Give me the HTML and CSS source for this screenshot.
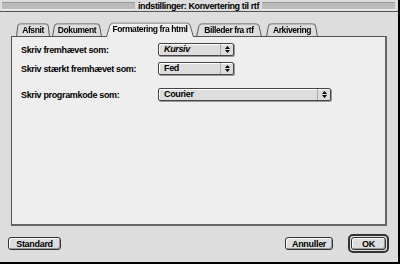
FILE: index.html
```html
<!DOCTYPE html>
<html lang="da">
<head>
  <meta charset="UTF-8">
  <title>indstillinger: Konvertering til rtf</title>
  <link rel="stylesheet" href="styles.css">
</head>
<body>
  <div class="window">
    <div class="titlebar">
      <div class="stripes"></div>
      <span class="title">indstillinger: Konvertering til rtf</span>
      <div class="stripes"></div>
    </div>

    <div class="tabs">
      <div class="tab t-afsnit">Afsnit</div>
      <div class="tab t-dok">Dokument</div>
      <div class="tab t-html active">Formatering fra html</div>
      <div class="tab t-bill">Billeder fra rtf</div>
      <div class="tab t-ark">Arkivering</div>
    </div>

    <div class="panel">
      <div class="row">
        <label>Skriv fremhævet som:</label>
        <div class="popup short"><span class="val italic">Kursiv</span><span class="arrows"><svg width="5" height="7" viewBox="0 0 5 7"><path d="M2.5 0L5 3H0z M0 4h5L2.5 7z" fill="#000"/></svg></span></div>
      </div>
      <div class="row">
        <label>Skriv stærkt fremhævet som:</label>
        <div class="popup short"><span class="val">Fed</span><span class="arrows"><svg width="5" height="7" viewBox="0 0 5 7"><path d="M2.5 0L5 3H0z M0 4h5L2.5 7z" fill="#000"/></svg></span></div>
      </div>
      <div class="row gap-top">
        <label>Skriv programkode som:</label>
        <div class="popup long"><span class="val">Courier</span><span class="arrows"><svg width="5" height="7" viewBox="0 0 5 7"><path d="M2.5 0L5 3H0z M0 4h5L2.5 7z" fill="#000"/></svg></span></div>
      </div>
    </div>

    <div class="footer">
      <button class="btn std">Standard</button>
      <div class="right">
        <button class="btn cancel">Annuller</button>
        <span class="ring"><button class="btn ok">OK</button></span>
      </div>
    </div>
  </div>
</body>
</html>
```

FILE: styles.css
```css
body {
  margin: 0;
  padding: 0;
  background-color: #000;
  font-family: "Liberation Sans", Arial, sans-serif;
  font-weight: bold;
  font-size: 9px;
  letter-spacing: -0.35px;
  color: #000;
}

.window {
  width: 398px;
  height: 262px;
  background-color: #dddddd;
  overflow: hidden;
}

.titlebar {
  height: 12px;
  display: flex;
  align-items: center;
  gap: 3px;
  padding: 0 3px 0 2px;
  border-bottom: 1px solid #555;
  box-sizing: border-box;
  background-color: #dddddd;
}

.stripes {
  flex: 1;
  height: 8px;
  background-color: #bbbbbb;
  border-top: 1px solid #999;
  border-bottom: 1px solid #eee;
  box-sizing: border-box;
}

.title {
  white-space: nowrap;
  letter-spacing: -0.4px;
}

.tabs {
  display: flex;
  align-items: flex-end;
  height: 16px;
  margin-top: 9px;
  padding-left: 16px;
}

.tab {
  position: relative;
  height: 15px;
  line-height: 16px;
  text-align: center;
  box-sizing: border-box;
  z-index: 1;
  font-size: 8.5px;
  letter-spacing: -0.4px;
  white-space: nowrap;
}

.tab::before {
  content: "";
  position: absolute;
  inset: 0;
  z-index: -1;
  background-color: #dddddd;
  border: 1px solid #555;
  border-bottom: none;
  border-radius: 4px 4px 0 0;
  transform: perspective(18px) rotateX(7deg);
  transform-origin: bottom;
}

.tab.active {
  height: 16px;
  z-index: 2;
}

.tab.active::before {
  background-color: #eeeeee;
  box-shadow: inset 1px 1px #fff;
}

.t-afsnit { width: 34px; }
.t-dok { width: 50px; margin-left: 2px; }
.t-html { width: 88px; margin-left: 4px; }
.t-bill { width: 66px; margin-left: 2px; }
.t-ark { width: 52px; margin-left: 4px; }

.panel {
  margin: -1px 11px 0 11px;
  height: 190px;
  background-color: #eeeeee;
  border: 1px solid #555;
  border-right: 2px solid #666;
  border-bottom: 2px solid #666;
  box-sizing: border-box;
  padding: 6px 0 0 9px;
  position: relative;
  z-index: 1;
}

.row {
  display: flex;
  align-items: center;
  height: 13px;
  margin-bottom: 6px;
}

.row.gap-top {
  margin-top: 13px;
}

.row label {
  width: 137px;
}

.popup {
  display: flex;
  align-items: stretch;
  height: 13px;
  background-color: #dddddd;
  border: 1px solid #444;
  border-radius: 2px;
  box-shadow: 1px 1px 0 #999, inset 1px 1px #fff;
  box-sizing: border-box;
}

.popup.short { width: 76px; }
.popup.long { width: 173px; }

.val {
  flex: 1;
  padding-left: 5px;
  line-height: 11px;
}

.val.italic {
  font-style: italic;
}

.arrows {
  width: 12px;
  display: flex;
  align-items: center;
  justify-content: center;
  border-left: 1px solid #aaa;
}

.footer {
  display: flex;
  justify-content: space-between;
  align-items: center;
  padding: 0 9px 0 8px;
  margin-top: 8px;
}

.right {
  display: flex;
  align-items: center;
  gap: 15px;
}

.btn {
  font-family: "Liberation Sans", Arial, sans-serif;
  font-weight: bold;
  font-size: 9px;
  letter-spacing: -0.3px;
  height: 13px;
  padding: 0;
  background-color: #dddddd;
  border: 1px solid #333;
  border-radius: 3px;
  box-shadow: inset 1px 1px #fff, inset -1px -1px #999;
  color: #000;
}

.btn.std { width: 53px; }
.btn.cancel { width: 48px; }
.btn.ok { width: 35px; display: block; }

.ring {
  display: block;
  padding: 1px;
  border: 2px solid #333;
  border-radius: 5px;
  background-color: #dddddd;
}
```
